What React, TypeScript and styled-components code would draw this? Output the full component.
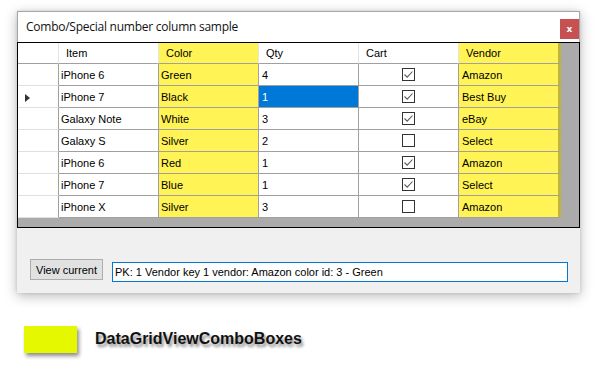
import React from "react";
import styled, { createGlobalStyle, css } from "styled-components";

const GlobalStyle = createGlobalStyle`
  html, body { margin: 0; padding: 0; background: #ffffff; }
  * { box-sizing: border-box; }
`;

const Page = styled.div`
  width: 596px;
  height: 372px;
  padding: 11px 0 0 17px;
  overflow: hidden;
  background: #ffffff;
  font-family: "Liberation Sans", Arial, sans-serif;
`;

const Window = styled.div`
  width: 563px;
  height: 282px;
  display: flex;
  flex-direction: column;
  background: #f0f0f0;
  box-shadow: 0 3px 12px rgba(0, 0, 0, 0.28), 0 0 3px rgba(0, 0, 0, 0.12);
`;

const TitleBar = styled.div`
  height: 31px;
  display: flex;
  align-items: flex-start;
  justify-content: space-between;
  background: #ffffff;
  border: 1px solid #a6a6a6;
  border-bottom: none;
`;

const Title = styled.div`
  padding: 6px 0 0 8px;
  font-family: "Open Sans", "Noto Sans", sans-serif;
  font-size: 12px;
  letter-spacing: -0.25px;
  color: #111;
`;

const CloseButton = styled.div`
  width: 19px;
  height: 20px;
  margin-top: 7px;
  background: #c75050;
  color: #fff;
  font-family: "DejaVu Sans", sans-serif;
  font-weight: bold;
  font-size: 9px;
  display: flex;
  align-items: center;
  justify-content: center;
`;

const Grid = styled.div`
  height: 186px;
  border: 1px solid #000;
  background: #ababab;
  display: flex;
  flex-direction: column;
`;

const columns = "41px 100px 100px 100px 100px 102px";

const HeaderRow = styled.div`
  display: grid;
  grid-template-columns: ${columns};
  height: 21px;
`;

const DataRow = styled.div`
  display: grid;
  grid-template-columns: ${columns};
  height: 22px;
`;

type Tone = "white" | "yellow" | "selected";

const toneBg: Record<Tone, string> = {
  white: "#ffffff",
  yellow: "#fff355",
  selected: "#0078d7",
};

const edge = css`
  border-right: 3px solid #beb43e;
`;

const HeaderCell = styled.div<{ $tone: Tone; $edge?: boolean }>`
  background: ${(p) => toneBg[p.$tone]};
  border-right: 1px solid #e4e4e4;
  border-bottom: 1px solid #a0a0a0;
  padding-left: 7px;
  display: flex;
  align-items: center;
  font-size: 11px;
  color: #000;
  ${(p) => p.$edge && edge}
`;

const RowHeader = styled.div`
  background: #ffffff;
  border-right: 1px solid #a0a0a0;
  border-bottom: 1px solid #e0e0e0;
  display: flex;
  align-items: center;
  padding-left: 7px;
`;

const CurrentArrow = styled.span`
  width: 0;
  height: 0;
  margin-top: 2px;
  border-top: 4px solid transparent;
  border-bottom: 4px solid transparent;
  border-left: 5px solid #333;
`;

const Cell = styled.div<{ $tone: Tone; $edge?: boolean; $pad?: number; $center?: boolean }>`
  background: ${(p) => toneBg[p.$tone]};
  color: ${(p) => (p.$tone === "selected" ? "#ffffff" : "#000000")};
  border-right: 1px solid #a0a0a0;
  border-bottom: 1px solid #a0a0a0;
  padding-left: ${(p) => p.$pad ?? 2}px;
  display: flex;
  align-items: center;
  justify-content: ${(p) => (p.$center ? "center" : "flex-start")};
  font-size: 11px;
  white-space: nowrap;
  ${(p) => p.$edge && edge}
`;

const CheckBox = styled.span`
  width: 13px;
  height: 13px;
  margin-left: -1px;
  border: 1px solid #333;
  background: #fff;
  display: flex;
  align-items: center;
  justify-content: center;
`;

const BottomPanel = styled.div`
  flex: 1;
  display: flex;
  align-items: flex-start;
  gap: 9px;
  padding: 31px 12px 0 13px;
`;

const Button = styled.div`
  width: 73px;
  height: 21px;
  background: #e1e1e1;
  border: 1px solid #adadad;
  font-size: 11px;
  color: #000;
  display: flex;
  align-items: center;
  justify-content: center;
`;

const TextBox = styled.div`
  flex: 1;
  height: 20px;
  margin-top: 3px;
  background: #fff;
  border: 1px solid #0078d7;
  padding-left: 2px;
  font-size: 11px;
  color: #000;
  display: flex;
  align-items: center;
`;

const Legend = styled.div`
  display: flex;
  align-items: center;
  gap: 18px;
  margin: 33px 0 0 7px;
`;

const Swatch = styled.div`
  width: 53px;
  height: 27px;
  background: #e5f800;
  box-shadow: 2px 3px 4px rgba(0, 0, 0, 0.45);
`;

const LegendText = styled.div`
  font-family: "Liberation Sans", Arial, sans-serif;
  font-weight: bold;
  font-size: 16px;
  color: #111;
  text-shadow: 2px 3px 3px rgba(0, 0, 0, 0.45);
  margin-top: -2px;
`;

type Row = {
  item: string;
  color: string;
  qty: string;
  cart: boolean;
  vendor: string;
  current?: boolean;
};

const rows: Row[] = [
  { item: "iPhone 6", color: "Green", qty: "4", cart: true, vendor: "Amazon" },
  { item: "iPhone 7", color: "Black", qty: "1", cart: true, vendor: "Best Buy", current: true },
  { item: "Galaxy Note", color: "White", qty: "3", cart: true, vendor: "eBay" },
  { item: "Galaxy S", color: "Silver", qty: "2", cart: false, vendor: "Select" },
  { item: "iPhone 6", color: "Red", qty: "1", cart: true, vendor: "Amazon" },
  { item: "iPhone 7", color: "Blue", qty: "1", cart: true, vendor: "Select" },
  { item: "iPhone X", color: "Silver", qty: "3", cart: false, vendor: "Amazon" },
];

const Check = () => (
  <svg width="11" height="11" viewBox="0 0 11 11">
    <path d="M1.5 5.5 L4.2 8.2 L9.5 2.5" fill="none" stroke="#5a5a5a" strokeWidth="1.1" />
  </svg>
);

export default function App() {
  return (
    <>
      <GlobalStyle />
      <Page>
        <Window>
          <TitleBar>
            <Title>Combo/Special number column sample</Title>
            <CloseButton>x</CloseButton>
          </TitleBar>
          <Grid>
            <HeaderRow>
              <HeaderCell $tone="white" />
              <HeaderCell $tone="white">Item</HeaderCell>
              <HeaderCell $tone="yellow">Color</HeaderCell>
              <HeaderCell $tone="white">Qty</HeaderCell>
              <HeaderCell $tone="white">Cart</HeaderCell>
              <HeaderCell $tone="yellow" $edge>
                Vendor
              </HeaderCell>
            </HeaderRow>
            {rows.map((r, i) => (
              <DataRow key={i}>
                <RowHeader>{r.current && <CurrentArrow />}</RowHeader>
                <Cell $tone="white">{r.item}</Cell>
                <Cell $tone="yellow">{r.color}</Cell>
                <Cell $tone={r.current ? "selected" : "white"} $pad={3}>
                  {r.qty}
                </Cell>
                <Cell $tone="white" $center $pad={0}>
                  <CheckBox>{r.cart && <Check />}</CheckBox>
                </Cell>
                <Cell $tone="yellow" $edge $pad={3}>
                  {r.vendor}
                </Cell>
              </DataRow>
            ))}
          </Grid>
          <BottomPanel>
            <Button>View current</Button>
            <TextBox>PK: 1 Vendor key 1 vendor: Amazon color id: 3 - Green</TextBox>
          </BottomPanel>
        </Window>
        <Legend>
          <Swatch />
          <LegendText>DataGridViewComboBoxes</LegendText>
        </Legend>
      </Page>
    </>
  );
}
